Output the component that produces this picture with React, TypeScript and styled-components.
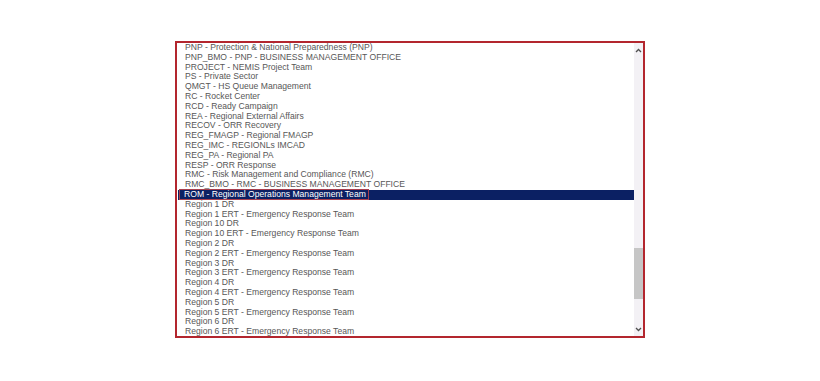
import React from 'react';
import styled, { createGlobalStyle } from 'styled-components';

const GlobalStyle = createGlobalStyle`
  html, body {
    margin: 0;
    padding: 0;
    background: #ffffff;
  }
`;

const Page = styled.div`
  width: 820px;
  height: 381px;
  padding: 41px 0 0 175px;
  box-sizing: border-box;
`;

const Frame = styled.div`
  width: 470px;
  height: 297px;
  box-sizing: border-box;
  border: 2px solid #b3262e;
  display: flex;
  background: #fff;
`;

const List = styled.div`
  flex: 1;
  overflow: hidden;
  font-family: "Liberation Sans", Arial, sans-serif;
  font-size: 8.6px;
  color: #575757;
`;

const Row = styled.div<{ selected?: boolean }>`
  height: 9.8px;
  line-height: 9.8px;
  padding-left: 7px;
  white-space: nowrap;
  background: ${p => (p.selected ? '#0b2063' : 'transparent')};
  color: ${p => (p.selected ? '#ffffff' : '#575757')};
  margin-left: 1px;
`;

const Focus = styled.span`
  display: inline-block;
  outline: 1px solid #a8404e;
  padding: 0 2px 0 4px;
  margin-left: -5px;
  line-height: 9.5px;
`;

const Scrollbar = styled.div`
  width: 9px;
  background: #f3f1f5;
  display: flex;
  flex-direction: column;
  align-items: center;
`;

const Arrow = styled.div`
  height: 14px;
  width: 9px;
  display: flex;
  align-items: center;
  justify-content: center;
`;

const Track = styled.div`
  flex: 1;
  width: 100%;
  display: flex;
  flex-direction: column;
  padding-top: 191px;
`;

const Thumb = styled.div`
  height: 51px;
  width: 100%;
  background: #c6c6c6;
`;

const items = [
  'PNP - Protection & National Preparedness (PNP)',
  'PNP_BMO - PNP - BUSINESS MANAGEMENT OFFICE',
  'PROJECT - NEMIS Project Team',
  'PS - Private Sector',
  'QMGT - HS Queue Management',
  'RC - Rocket Center',
  'RCD - Ready Campaign',
  'REA - Regional External Affairs',
  'RECOV - ORR Recovery',
  'REG_FMAGP - Regional FMAGP',
  'REG_IMC - REGIONLs IMCAD',
  'REG_PA - Regional PA',
  'RESP - ORR Response',
  'RMC - Risk Management and Compliance (RMC)',
  'RMC_BMO - RMC - BUSINESS MANAGEMENT OFFICE',
  'ROM - Regional Operations Management Team',
  'Region 1 DR',
  'Region 1 ERT - Emergency Response Team',
  'Region 10 DR',
  'Region 10 ERT - Emergency Response Team',
  'Region 2 DR',
  'Region 2 ERT - Emergency Response Team',
  'Region 3 DR',
  'Region 3 ERT - Emergency Response Team',
  'Region 4 DR',
  'Region 4 ERT - Emergency Response Team',
  'Region 5 DR',
  'Region 5 ERT - Emergency Response Team',
  'Region 6 DR',
  'Region 6 ERT - Emergency Response Team',
];

const SELECTED = 15;

const Chevron = ({ up }: { up?: boolean }) => (
  <svg width="7" height="5" viewBox="0 0 7 5">
    <path
      d={up ? 'M1 4 L3.5 1.5 L6 4' : 'M1 1 L3.5 3.5 L6 1'}
      fill="none"
      stroke="#505050"
      strokeWidth="1.3"
    />
  </svg>
);

export default function App() {
  return (
    <>
      <GlobalStyle />
      <Page>
        <Frame>
          <List>
            {items.map((t, i) => (
              <Row key={t} selected={i === SELECTED}>
                {i === SELECTED ? <Focus>{t}</Focus> : t}
              </Row>
            ))}
          </List>
          <Scrollbar>
            <Arrow>
              <Chevron up />
            </Arrow>
            <Track>
              <Thumb />
            </Track>
            <Arrow>
              <Chevron />
            </Arrow>
          </Scrollbar>
        </Frame>
      </Page>
    </>
  );
}
